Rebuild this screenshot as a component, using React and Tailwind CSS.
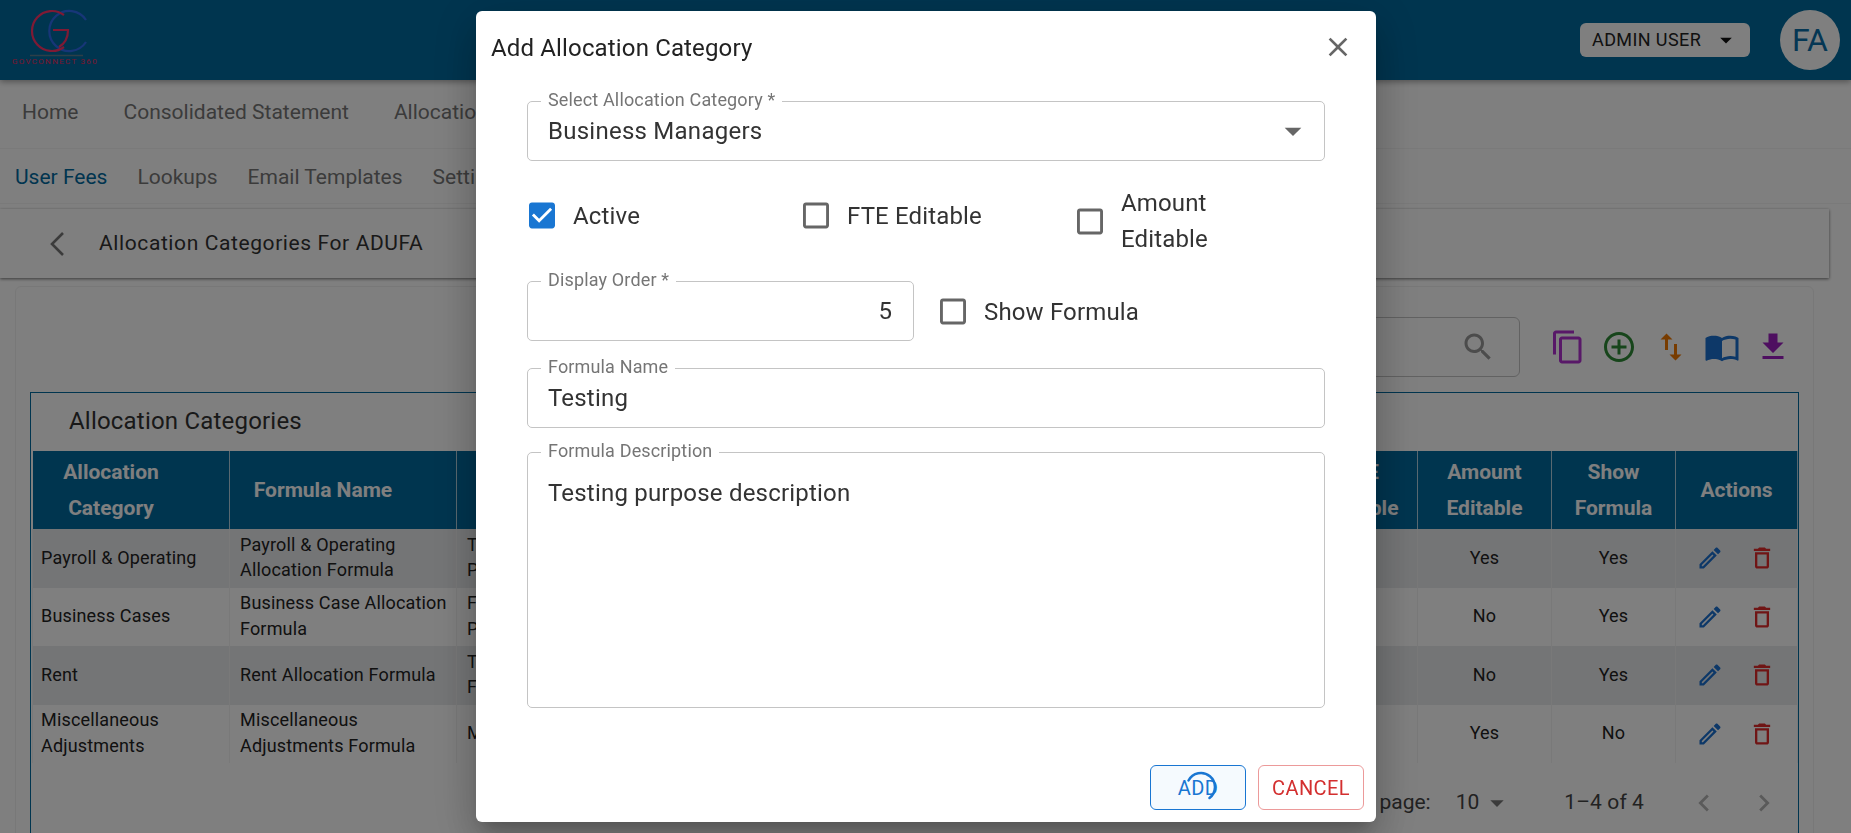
import React from "react";

const rows = [
  { cat: "Payroll & Operating", name: ["Payroll & Operating", "Allocation Formula"], desc: ["Total payroll and", "Payroll operating costs"], amount: "Yes", formula: "Yes", shade: true },
  { cat: "Business Cases", name: ["Business Case Allocation", "Formula"], desc: ["Funding for approved", "Program business cases"], amount: "No", formula: "Yes", shade: false },
  { cat: "Rent", name: ["Rent Allocation Formula"], desc: ["Total rent by", "FTE share"], amount: "No", formula: "Yes", shade: true },
  { cat: ["Miscellaneous", "Adjustments"], name: ["Miscellaneous", "Adjustments Formula"], desc: ["Miscellaneous adjustments"], amount: "Yes", formula: "No", shade: false },
];

function Icon({ d, className, viewBox = "0 0 24 24" }) {
  return (
    <svg viewBox={viewBox} className={className} fill="currentColor">
      <path d={d} />
    </svg>
  );
}

const paths = {
  copy: "M16 1H4c-1.1 0-2 .9-2 2v14h2V3h12V1zm3 4H8c-1.1 0-2 .9-2 2v14c0 1.1.9 2 2 2h11c1.1 0 2-.9 2-2V7c0-1.1-.9-2-2-2zm0 16H8V7h11v14z",
  add: "M13 7h-2v4H7v2h4v4h2v-4h4v-2h-4V7zm-1-5C6.48 2 2 6.48 2 12s4.48 10 10 10 10-4.48 10-10S17.52 2 12 2zm0 18c-4.41 0-8-3.59-8-8s3.59-8 8-8 8 3.59 8 8-3.59 8-8 8z",
  swap: "M16 17.01V10h-2v7.01h-3L15 21l4-3.99h-3zM9 3 5 6.99h3V14h2V6.99h3L9 3z",
  book: "M21 5c-1.11-.35-2.33-.5-3.5-.5-1.95 0-4.05.4-5.5 1.5-1.45-1.1-3.55-1.5-5.5-1.5S2.45 4.9 1 6v14.65c0 .25.25.5.5.5.1 0 .15-.05.25-.05C3.1 20.45 5.05 20 6.5 20c1.95 0 4.05.4 5.5 1.5 1.35-.85 3.8-1.5 5.5-1.5 1.65 0 3.35.3 4.75 1.05.1.05.15.05.25.05.25 0 .5-.25.5-.5V6c-.6-.45-1.25-.75-2-1zm0 13.5c-1.1-.35-2.3-.5-3.5-.5-1.7 0-4.15.65-5.5 1.5V8c1.35-.85 3.8-1.5 5.5-1.5 1.2 0 2.4.15 3.5.5v11.5z",
  download: "M19 9h-4V3H9v6H5l7 7 7-7zM5 18v2h14v-2H5z",
  edit: "M3 17.25V21h3.75L17.81 9.94l-3.75-3.75L3 17.25zM5.92 19H5v-.92l9.06-9.06.92.92L5.92 19zM20.71 7.04c.39-.39.39-1.02 0-1.41l-2.34-2.34c-.2-.2-.45-.29-.71-.29s-.51.1-.7.29l-1.83 1.83 3.75 3.75 1.83-1.83z",
  trash: "M6 19c0 1.1.9 2 2 2h8c1.1 0 2-.9 2-2V7H6v12zM8 9h8v10H8V9zm7.5-5-1-1h-5l-1 1H5v2h14V4h-3.5z",
  search: "M15.5 14h-.79l-.28-.27C15.41 12.59 16 11.11 16 9.5 16 5.91 13.09 3 9.5 3S3 5.91 3 9.5 5.91 16 9.5 16c1.61 0 3.09-.59 4.23-1.57l.27.28v.79l5 4.99L20.49 19l-4.99-5zm-6 0C7.01 14 5 11.99 5 9.5S7.01 5 9.5 5 14 7.01 14 9.5 11.99 14 9.5 14z",
  checked: "M19 3H5c-1.11 0-2 .9-2 2v14c0 1.1.89 2 2 2h14c1.11 0 2-.9 2-2V5c0-1.1-.89-2-2-2zm-9 14l-5-5 1.41-1.41L10 14.17l7.59-7.59L19 8l-9 9z",
  blank: "M19 5v14H5V5h14m0-2H5c-1.1 0-2 .9-2 2v14c0 1.1.9 2 2 2h14c1.1 0 2-.9 2-2V5c0-1.1-.9-2-2-2z",
  close: "M19 6.41 17.59 5 12 10.59 6.41 5 5 6.41 10.59 12 5 17.59 6.41 19 12 13.41 17.59 19 19 17.59 13.41 12z",
  caret: "m7 10 5 5 5-5z",
  left: "M15.41 7.41 14 6l-6 6 6 6 1.41-1.41L10.83 12z",
  right: "M10 6 8.59 7.41 13.17 12l-4.58 4.59L10 18l6-6z",
};

function Logo() {
  return (
    <div className="relative w-[110px] h-[80px] shrink-0">
      <svg viewBox="0 0 110 80" className="w-[110px] h-[80px]" fill="none" strokeWidth="2.2">
        <path d="M86 20 A20 20 0 1 0 86 42" stroke="#2f6cf0" />
        <path d="M64 15 A20 20 0 1 0 64 47" stroke="#ff3468" />
        <path d="M53 30 H68 C68 38 64 44 59 47" stroke="#ff3468" />
        <path d="M30 55.5 H83" stroke="#5a7f90" strokeWidth="1.5" />
      </svg>
      <span className="absolute left-[12px] top-[57px] text-[8px] leading-[10px] tracking-[1.3px] whitespace-nowrap text-[#ee2a5c]">
        GOVCONNECT 360
      </span>
    </div>
  );
}

function Field({ label, className, children }) {
  return (
    <div className={`relative border border-[#c4c4c4] rounded-[5px] px-[20px] ${className}`}>
      <span className="absolute -top-[12px] left-[13px] px-[7px] bg-white text-[18px] leading-[20px] tracking-[0.15px] text-[#757575] whitespace-nowrap">
        {label}
      </span>
      {children}
    </div>
  );
}

function Check({ checked, label, lines }) {
  return (
    <div className="flex items-center gap-[18px]">
      <Icon
        d={checked ? paths.checked : paths.blank}
        viewBox="3 3 18 18"
        className={`w-[26px] h-[27px] shrink-0 ${checked ? "text-[#1976d2]" : "text-[#666666]"}`}
      />
      <span className={`text-[24px] leading-[36px] tracking-[0.15px] text-[#333333] ${lines ? "" : "pt-[1px]"}`}>
        {lines ? lines.map((l) => <div key={l}>{l}</div>) : label}
      </span>
    </div>
  );
}

function Lines({ value }) {
  const list = Array.isArray(value) ? value : [value];
  return list.map((l) => <div key={l}>{l}</div>);
}

export default function App() {
  return (
    <div className="relative h-screen overflow-hidden bg-white font-['Roboto',sans-serif]">
      <header className="h-20 bg-[#016a9f] flex items-center justify-between pr-[11px] shadow-[0_2px_6px_rgba(0,0,0,0.35)] relative">
        <Logo />
        <div className="flex items-center gap-[30px]">
          <button className="w-[170px] h-[34px] bg-white rounded-[6px] flex items-center pl-[12px] pb-[1px] text-[18px] tracking-[0.4px] text-[#222222]">
            ADMIN USER
            <Icon d={paths.caret} className="w-[28px] h-[28px] ml-[11px] text-[#111111]" />
          </button>
          <div className="w-[60px] h-[60px] rounded-full bg-white flex items-center justify-center text-[32px] text-[#0a6ea8]">
            FA
          </div>
        </div>
      </header>

      <nav className="h-[69px] pb-[3px] flex items-center gap-[45px] pl-[22px] text-[21px] text-[#777777] border-b border-[#f4f4f4]">
        <span>Home</span>
        <span>Consolidated Statement</span>
        <span>Allocations</span>
      </nav>
      <nav className="h-[55px] pt-[3px] flex items-center gap-[30px] pl-[15px] text-[21px] text-[#777777] border-b border-[#f4f4f4]">
        <span className="text-[#016a9f]">User Fees</span>
        <span>Lookups</span>
        <span>Email Templates</span>
        <span>Settings</span>
      </nav>

      <div className="mt-[5px] mr-[22px] h-[69px] flex items-center pl-[50px] gap-[35px] bg-white shadow-[0_1px_3px_rgba(0,0,0,0.55)]">
        <svg viewBox="0 0 14 24" className="w-[14px] h-[24px] text-[#777777]" fill="none" stroke="currentColor" strokeWidth="2.6">
          <path d="M13 1 L2 12 L13 23" />
        </svg>
        <span className="text-[21px] tracking-[0.6px] text-[#333333]">Allocation Categories For ADUFA</span>
      </div>

      <section className="mt-2 ml-[15px] mr-[37px] border border-[#f0f0f0] rounded-[6px] pt-[30px] px-[14px] h-[600px]">
        <div className="flex items-center justify-end h-[60px]">
          <div className="w-[400px] h-[60px] border border-[#c4c4c4] rounded-[6px] flex items-center justify-end pr-[23px]">
            <Icon d={paths.search} className="w-[36px] h-[36px] text-[#999999]" />
          </div>
          <div className="flex items-center ml-[30px] mr-[8px] gap-[15.25px]">
            <Icon d={paths.copy} className="w-[36px] h-[36px] text-[#b030d0]" />
            <Icon d={paths.add} className="w-[36px] h-[36px] text-[#2e8b36]" />
            <Icon d={paths.swap} className="w-[36px] h-[36px] text-[#f07800]" />
            <Icon d={paths.book} className="w-[36px] h-[36px] text-[#1a70d0]" />
            <Icon d={paths.download} className="w-[36px] h-[36px] text-[#9c1fc0]" />
          </div>
        </div>

        <div className="mt-[15px] border border-[#016a9f] px-px h-[500px]">
          <div className="h-[58px] pb-[2px] flex items-center pl-[37px] text-[24px] tracking-[0.2px] text-[#333333]">Allocation Categories</div>
          <table className="table-fixed w-[1765px] border-collapse text-[18px] tracking-[0.17px] leading-[25.5px] text-[#222222]">
            <colgroup>
              <col className="w-[197px]" />
              <col className="w-[227px]" />
              <col className="w-[547px]" />
              <col className="w-[150px]" />
              <col className="w-[150px]" />
              <col className="w-[114px]" />
              <col className="w-[134px]" />
              <col className="w-[124px]" />
              <col className="w-[122px]" />
            </colgroup>
            <thead>
              <tr className="h-[78px] bg-[#016a9f] text-white text-[21px] tracking-normal leading-[36px] font-bold">
                {[
                  ["Allocation", "Category"],
                  "Formula Name",
                  "Formula Description",
                  "Display Order",
                  "Active",
                  ["FTE", "Editable"],
                  ["Amount", "Editable"],
                  ["Show", "Formula"],
                  "Actions",
                ].map((h, i) => (
                  <th key={i} className={`border-x border-white/70 font-bold text-center pl-2 ${i < 2 ? "pr-[48px]" : "pr-2"}`}>
                    <Lines value={h} />
                  </th>
                ))}
              </tr>
            </thead>
            <tbody>
              {rows.map((r, i) => (
                <tr key={i} className={`h-[58.5px] ${r.shade ? "bg-[#e9ebed]" : "bg-white"}`}>
                  <td className="border-x border-[#f2f2f2] pl-[8px] pr-2 pb-[2px]">
                    <Lines value={r.cat} />
                  </td>
                  <td className="border-x border-[#f2f2f2] pl-[10px] pr-2 pb-[2px]">
                    <Lines value={r.name} />
                  </td>
                  <td className="border-x border-[#f2f2f2] pl-[10px] pr-2 pb-[2px]">
                    <Lines value={r.desc} />
                  </td>
                  <td className="border-x border-[#f2f2f2] text-center pb-[2px]">{i + 1}</td>
                  <td className="border-x border-[#f2f2f2] text-center pb-[2px]">Yes</td>
                  <td className="border-x border-[#f2f2f2] text-center pb-[2px]">Yes</td>
                  <td className="border-x border-[#f2f2f2] text-center pb-[2px]">{r.amount}</td>
                  <td className="border-x border-[#f2f2f2] text-center pb-[2px]">{r.formula}</td>
                  <td className="border-x border-[#f2f2f2]">
                    <div className="flex items-center justify-center gap-[24px] pr-[1px]">
                      <Icon d={paths.edit} className="w-[28px] h-[28px] text-[#1a70d0]" />
                      <Icon d={paths.trash} className="w-[28px] h-[28px] text-[#e02a2a]" />
                    </div>
                  </td>
                </tr>
              ))}
            </tbody>
          </table>
          <div className="flex items-center justify-end h-[77px] pt-[2px] pr-[16px] text-[21px] text-[#444444]">
            <span className="mr-[25px]">Rows per page:</span>
            <span>10</span>
            <Icon d={paths.caret} className="w-[32px] h-[32px] ml-[2px] text-[#777777]" />
            <span className="ml-[51px] tracking-[0.1px]">1–4 of 4</span>
            <Icon d={paths.left} className="w-[34px] h-[34px] ml-[43px] text-[#b5b5b5]" />
            <Icon d={paths.right} className="w-[34px] h-[34px] ml-[26px] text-[#b5b5b5]" />
          </div>
        </div>
      </section>

      {/* dialog */}
      <div className="fixed inset-0 bg-black/50 flex justify-center items-center pl-px">
        <div className="w-[900px] h-[811px] bg-white rounded-[6px] flex flex-col shadow-[0_11px_15px_-7px_rgba(0,0,0,0.2),0_24px_38px_3px_rgba(0,0,0,0.14),0_9px_46px_8px_rgba(0,0,0,0.12)]">
          <div className="h-[72px] flex items-center justify-between pl-[15px] pr-[22px] shrink-0">
            <h2 className="text-[24px] tracking-[0.15px] pt-[1px] text-[#222222]">Add Allocation Category</h2>
            <Icon d={paths.close} className="w-[32px] h-[32px] text-[#666666]" />
          </div>

          <div className="pl-[51px] w-[849px] pt-[18px]">
            <Field label="Select Allocation Category *" className="h-[60px] flex items-center justify-between pr-[11px]">
              <span className="text-[24px] tracking-[0.25px] text-[#333333]">Business Managers</span>
              <Icon d={paths.caret} className="w-[40px] h-[40px] text-[#666666]" />
            </Field>

            <div className="grid grid-cols-[274px_274px_250px] mt-[24px] pl-[2px] items-center h-[72px]">
              <div className="-mt-[12px]">
                <Check checked label="Active" />
              </div>
              <div className="-mt-[12px]">
                <Check label="FTE Editable" />
              </div>
              <Check lines={["Amount", "Editable"]} />
            </div>

            <div className="flex items-center mt-[24px]">
              <Field label="Display Order *" className="w-[387px] h-[60px] flex items-center justify-end pr-[21px]">
                <span className="text-[24px] text-[#333333]">5</span>
              </Field>
              <div className="ml-[26px]">
                <Check label="Show Formula" />
              </div>
            </div>

            <Field label="Formula Name" className="h-[60px] mt-[27px] flex items-center">
              <span className="text-[24px] tracking-[0.2px] text-[#333333]">Testing</span>
            </Field>

            <Field label="Formula Description" className="h-[256px] mt-[24px] pt-[22px]">
              <span className="text-[24px] tracking-[0.2px] text-[#333333]">Testing purpose description</span>
            </Field>
          </div>

          <div className="mt-auto flex justify-end gap-[12px] pr-[12px] pb-[12px]">
            <button className="relative w-[96px] h-[45px] rounded-[6px] border border-[#1976d2] bg-[#f5fafe] text-[20px] tracking-[0.4px] text-[#1976d2]">
              ADD
              <svg viewBox="0 0 32 32" className="absolute left-[34px] top-[5px] w-[32px] h-[32px]" fill="none" stroke="#1976d2" strokeWidth="2.5" strokeLinecap="round">
                <path d="M3.5 9.5 A14 14 0 1 1 24.5 27" />
              </svg>
            </button>
            <button className="w-[106px] h-[45px] rounded-[6px] border border-[#ec9a9a] text-[20px] tracking-[0.4px] text-[#d32f2f]">
              CANCEL
            </button>
          </div>
        </div>
      </div>
    </div>
  );
}
